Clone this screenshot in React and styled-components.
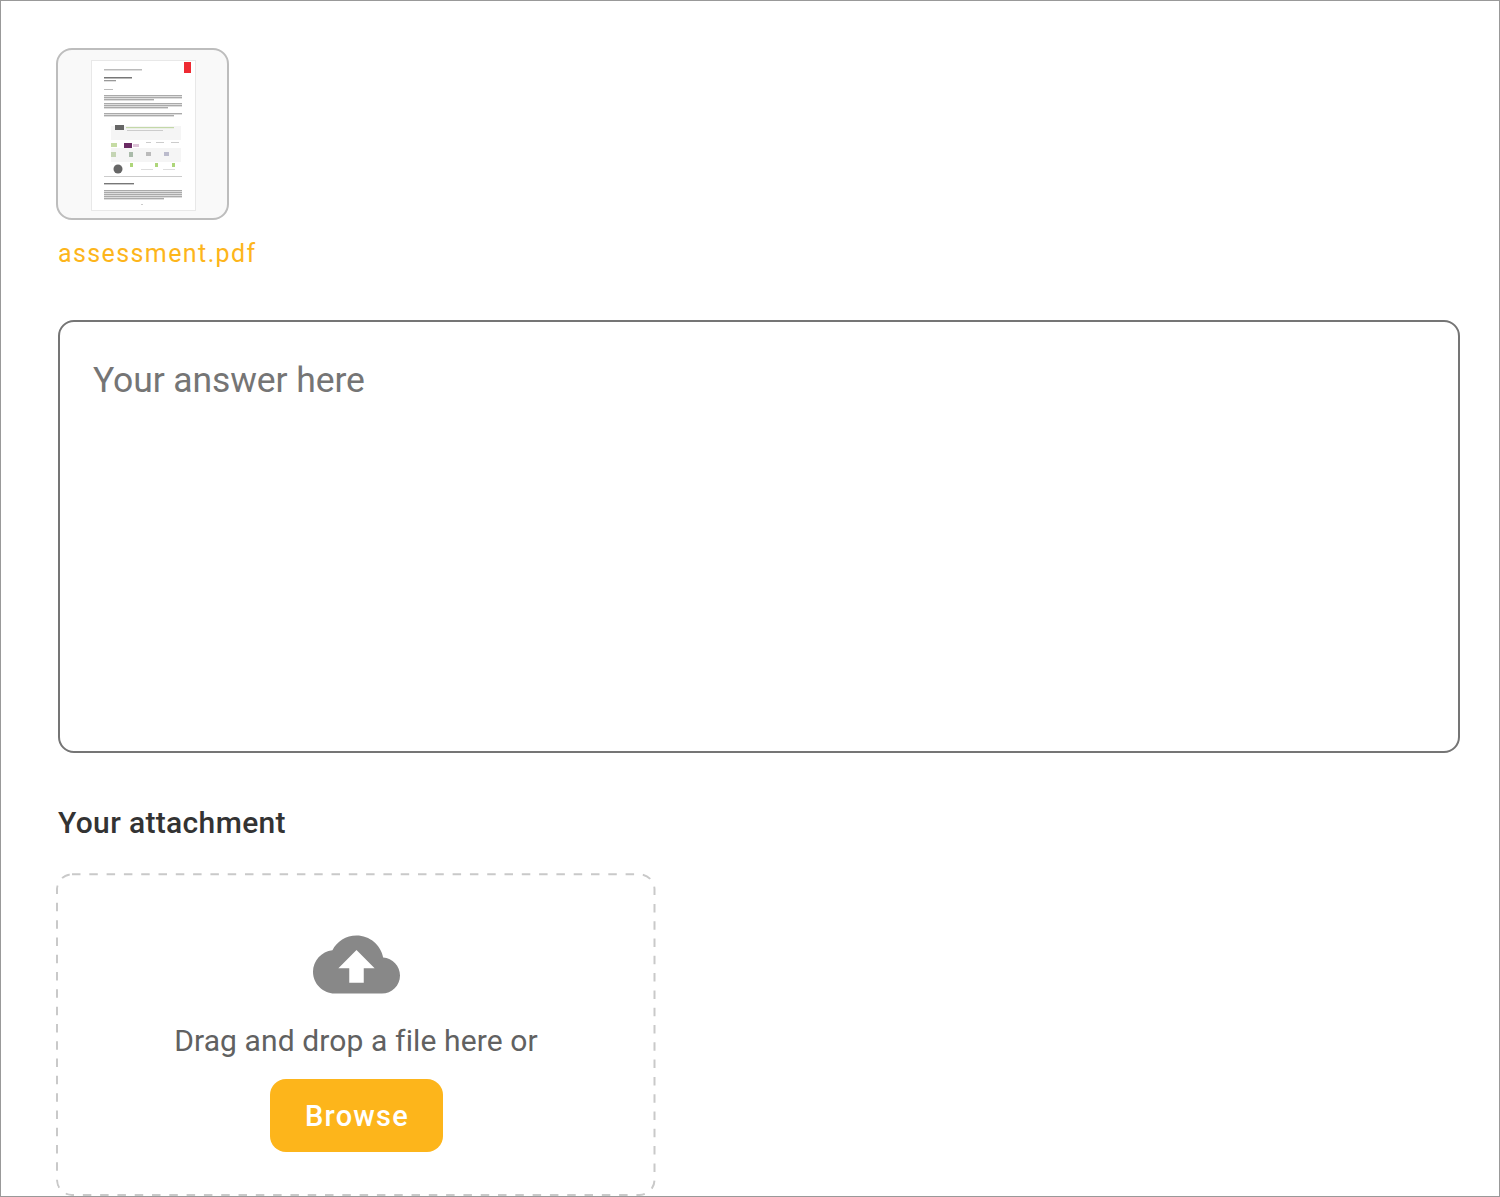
import React from 'react'
import styled, { createGlobalStyle } from 'styled-components'

const GlobalStyle = createGlobalStyle`
  html, body {
    margin: 0;
    background: #fff;
    font-family: Roboto, "Liberation Sans", sans-serif;
  }
`

const Frame = styled.div`
  box-sizing: border-box;
  width: 1500px;
  height: 1197px;
  overflow: hidden;
  padding: 47px 39px 0 55px;
  border: 1px solid #999;
  display: flex;
  flex-direction: column;
  align-items: flex-start;
`

const Thumb = styled.div`
  box-sizing: border-box;
  width: 173px;
  height: 172px;
  padding: 2px 0 0 3px;
  border: 2px solid #bdbdbd;
  border-radius: 16px;
  background: #f9f9f9;
  display: flex;
  justify-content: center;
  align-items: center;
`

const FileName = styled.a`
  margin: 18px 0 0 2px;
  font-size: 25px;
  line-height: 32px;
  letter-spacing: 1.4px;
  color: #fdb51b;
`

const Answer = styled.textarea`
  box-sizing: border-box;
  display: block;
  width: 1402px;
  height: 433px;
  margin: 50px 0 0 2px;
  padding: 36px 33px;
  border: 2px solid #757575;
  border-radius: 16px;
  outline: none;
  resize: none;
  font-family: inherit;
  font-size: 35.5px;
  line-height: 44px;
  letter-spacing: -0.1px;
  color: #333;
  &::placeholder {
    color: #757575;
    opacity: 1;
  }
`

const SectionTitle = styled.h3`
  margin: 51px 0 0 2px;
  font-size: 30px;
  line-height: 38px;
  font-weight: 500;
  letter-spacing: 0.35px;
  color: #333;
`

const DropZone = styled.div`
  flex: none;
  box-sizing: border-box;
  width: 600px;
  height: 323px;
  margin-top: 31px;
  padding-top: 48px;
  border-radius: 16px;
  background: url("data:image/svg+xml,%3Csvg xmlns='http://www.w3.org/2000/svg' width='600' height='323'%3E%3Crect x='1' y='1.3' width='597.5' height='320.7' rx='15' fill='none' stroke='%23c9c9c9' stroke-width='2' stroke-dasharray='8.5 8.8'/%3E%3C/svg%3E") no-repeat;
  display: flex;
  flex-direction: column;
  align-items: center;
`

const CloudIcon = styled.svg`
  display: block;
  width: 87px;
  height: 87px;
  fill: #888;
`

const DropText = styled.p`
  margin: 14px 0 0;
  font-size: 30px;
  line-height: 38px;
  letter-spacing: 0.12px;
  color: #616161;
`

const BrowseButton = styled.button`
  width: 173px;
  height: 73px;
  margin-top: 19px;
  padding: 0 0 0 2px;
  border: 0;
  border-radius: 16px;
  background: #fdb51b;
  color: #fff;
  font-family: inherit;
  font-size: 29px;
  font-weight: 500;
  letter-spacing: 1.2px;
`

// blurry text lines of the pdf preview: x, y, width, height, shade
const bars = [
  [13, 9, 38, 1.5, '#bbb'],
  [13, 17, 28, 1.5, '#777'],
  [13, 20, 12, 1.3, '#999'],
  [13, 29, 9, 1, '#bbb'],
  [13, 35, 78, 1.4, '#aaa'],
  [13, 37, 78, 1.4, '#aaa'],
  [13, 39, 50, 1.4, '#aaa'],
  [13, 43, 78, 1.4, '#aaa'],
  [13, 45, 78, 1.4, '#aaa'],
  [13, 47, 64, 1.4, '#aaa'],
  [13, 53, 78, 1.4, '#aaa'],
  [13, 55, 70, 1.4, '#aaa'],
  [13, 116, 78, 1, '#ccc'],
  [13, 123, 30, 1.4, '#777'],
  [13, 130, 78, 1.4, '#aaa'],
  [13, 132, 78, 1.4, '#aaa'],
  [13, 134, 78, 1.4, '#aaa'],
  [13, 136, 78, 1.4, '#aaa'],
  [13, 138, 60, 1.4, '#aaa'],
  [50, 144, 2, 1, '#ccc'],
]

const PdfPreview = () => (
  <svg width="106" height="151" viewBox="0 0 106 151">
    <defs>
      <filter id="soft">
        <feGaussianBlur stdDeviation="0.7" />
      </filter>
    </defs>
    <rect x="0.5" y="0.5" width="104" height="150" fill="#fff" stroke="#e8e8e8" />
    <g filter="url(#soft)">
      <rect x="93" y="2" width="7" height="11" fill="#ee2a33" />
      {bars.map(([x, y, w, h, c], i) => (
        <rect key={i} x={x} y={y} width={w} height={h} fill={c} />
      ))}
      <rect x="20" y="66" width="70" height="14" fill="#f5f5f5" />
      <rect x="20" y="88" width="70" height="14" fill="#f5f5f5" />
      <rect x="24" y="65" width="9" height="5" fill="#666" />
      <rect x="35" y="67" width="48" height="1.2" fill="#c3d8a8" />
      <rect x="36" y="70" width="36" height="1" fill="#ccc" />
      <rect x="20" y="83" width="6" height="4" fill="#c6dca4" />
      <rect x="33" y="83" width="8" height="5" fill="#6b2a63" />
      <rect x="42" y="84" width="6" height="3" fill="#ddc4d8" />
      <rect x="55" y="82" width="5" height="1" fill="#ccc" />
      <rect x="65" y="82" width="8" height="1" fill="#ccc" />
      <rect x="80" y="82" width="8" height="1" fill="#ccc" />
      <rect x="20" y="92" width="5" height="5" fill="#c5d5b4" />
      <rect x="38" y="92" width="4" height="5" fill="#aba" />
      <rect x="55" y="92" width="5" height="4" fill="#bbb" />
      <rect x="73" y="92" width="5" height="4" fill="#bbc" />
      <rect x="39" y="103" width="3" height="4" fill="#aed67a" />
      <rect x="64" y="103" width="3" height="4" fill="#aed67a" />
      <rect x="81" y="103" width="3" height="4" fill="#aed67a" />
      <rect x="50" y="109" width="12" height="1" fill="#ddd" />
      <rect x="72" y="109" width="12" height="1" fill="#ddd" />
      <circle cx="27" cy="109" r="4.5" fill="#666" />
    </g>
  </svg>
)

export default function App() {
  return (
    <Frame>
      <GlobalStyle />
      <Thumb>
        <PdfPreview />
      </Thumb>
      <FileName>assessment.pdf</FileName>
      <Answer placeholder="Your answer here" />
      <SectionTitle>Your attachment</SectionTitle>
      <DropZone>
        <CloudIcon viewBox="0 0 24 24">
          <path d="M19.35 10.04C18.67 6.59 15.64 4 12 4 9.11 4 6.6 5.64 5.35 8.04 2.34 8.36 0 10.91 0 14c0 3.31 2.69 6 6 6h13c2.76 0 5-2.24 5-5 0-2.64-2.05-4.78-4.65-4.96zM14 13v4h-4v-4H7l5-5 5 5h-3z" />
        </CloudIcon>
        <DropText>Drag and drop a file here or</DropText>
        <BrowseButton>Browse</BrowseButton>
      </DropZone>
    </Frame>
  )
}
